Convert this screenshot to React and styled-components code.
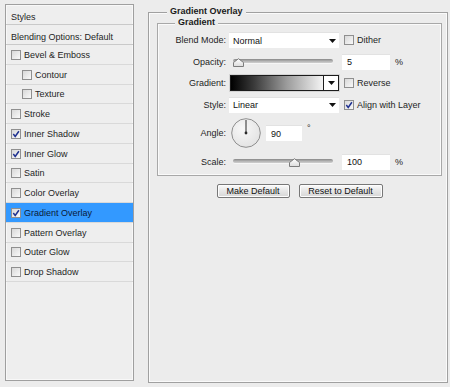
import React from "react";
import styled, {createGlobalStyle} from "styled-components";

const GlobalStyle = createGlobalStyle`
  body {
    margin: 0;
    background: #ececec;
    font-family: "Liberation Sans", Arial, sans-serif;
    font-size: 9px;
    color: #1e1e1e;
  }
`

const effects = [
    {name: "Bevel & Emboss"},
    {name: "Contour", sub: true},
    {name: "Texture", sub: true},
    {name: "Stroke"},
    {name: "Inner Shadow", checked: true},
    {name: "Inner Glow", checked: true},
    {name: "Satin"},
    {name: "Color Overlay"},
    {name: "Gradient Overlay", checked: true, selected: true},
    {name: "Pattern Overlay"},
    {name: "Outer Glow"},
    {name: "Drop Shadow"},
]

const Page = styled.div`
  display: flex;
  width: 450px;
  height: 387px;
  box-sizing: border-box;
  padding: 4px 2px 4px 5px;
  gap: 14px;
`

const StylesPanel = styled.div`
  width: 129px;
  margin-bottom: 2px;
  box-sizing: border-box;
  border: 1px solid #9f9f9f;
  box-shadow: inset 0 0 0 1px #f8f8f8;
  background: #eeeeee;
  display: flex;
  flex-direction: column;
`

const ListRow = styled.div`
  display: flex;
  align-items: center;
  gap: 3px;
  height: ${({tall}) => tall ? 20 : 19.75}px;
  box-sizing: border-box;
  padding-left: ${({sub}) => sub ? 16 : 5}px;
  padding-top: ${({tall}) => tall ? 4 : 1}px;
  border-bottom: 1px solid ${({tall}) => tall ? '#c9c9c9' : '#d9d9d9'};
  background: ${({selected}) => selected ? '#3399ff' : 'transparent'};
  color: ${({selected}) => selected ? '#0a1a3a' : '#1e1e1e'};
  white-space: nowrap;
`

const CheckBox = ({checked}) => (
    <svg width="10" height="10" viewBox="0 0 10 10" style={{flex: "none"}}>
        <defs>
            <linearGradient id="cbfill" x1="0" y1="0" x2="1" y2="1">
                <stop offset="0" stopColor="#d6d6d6"/>
                <stop offset="1" stopColor="#fbfbfb"/>
            </linearGradient>
        </defs>
        <rect x="0.5" y="0.5" width="9" height="9" fill="url(#cbfill)" stroke="#8f8f8f"/>
        {checked && <path d="M2.3 5.1 L4.2 7.4 L7.9 2.2" fill="none" stroke="#1f3190" strokeWidth="1.5"/>}
    </svg>
)

const Settings = styled.fieldset`
  flex: none;
  width: 300px;
  margin: 2px 0 0 0;
  min-width: 0;
  box-sizing: border-box;
  padding: 0 5px 0 8px;
  border: 1px solid #a0a0a0;
  box-shadow: inset 0 0 0 1px #fafafa;
`

const GroupBox = styled.fieldset`
  margin: -2px 0 0 0;
  min-width: 0;
  padding: 2px 0 5px 0;
  border: 1px solid #a8a8a8;
  box-shadow: inset 0 0 0 1px #fafafa;
`

const Legend = styled.legend`
  margin-left: ${({indent}) => indent}px;
  padding: 0 3px 3px;
  line-height: 10px;
  font-weight: bold;
  color: #1a1a1a;
  background: #ececec;
`

const FormGrid = styled.div`
  display: grid;
  grid-template-columns: 68px 110px 1fr;
  column-gap: 3px;
  row-gap: 5.6px;
  align-items: center;
`

const Label = styled.div`
  text-align: right;
  white-space: nowrap;
`

const Cell = styled.div`
  display: flex;
  align-items: center;
  gap: ${({gap}) => gap || 0}px;
`

const Field = styled.div`
  display: flex;
  align-items: center;
  justify-content: space-between;
  width: ${({width}) => width ? `${width}px` : 'auto'};
  flex: ${({width}) => width ? 'none' : 1};
  height: 16px;
  box-sizing: border-box;
  padding: 0 3px 0 ${({pad}) => pad || 4}px;
  background: #ffffff;
  border-top: 1px solid #e2e2e2;
  color: #111;
`

const Arrow = () => (
    <svg width="7" height="4" viewBox="0 0 7 4">
        <polygon points="0,0 7,0 3.5,4" fill="#111"/>
    </svg>
)

const Select = ({value}) => (
    <Field>
        <span>{value}</span>
        <Arrow/>
    </Field>
)

const Option = styled.label`
  display: flex;
  align-items: center;
  gap: 3px;
  margin-left: 2px;
  white-space: nowrap;
`

const Unit = styled.span`
  align-self: ${({sup}) => sup ? 'flex-start' : 'center'};
  margin-top: ${({sup}) => sup ? '5px' : 0};
`

const SliderBox = styled.div`
  position: relative;
  flex: 1;
  height: 16px;
  margin: 0 6px 0 4px;
`

const Track = styled.div`
  margin-top: 5px;
  height: 4px;
  border-radius: 2px;
  background: linear-gradient(#888, #b8b8b8 60%, #d0d0d0);
  box-shadow: 0 1px 0 #f6f6f6;
`

const Thumb = styled.svg`
  position: absolute;
  top: 4px;
`

const Slider = ({value}) => (
    <SliderBox>
        <Track/>
        <Thumb width="11" height="9" viewBox="0 0 11 9" style={{left: `calc(${value}% - 5px)`}}>
            <defs>
                <linearGradient id="thumbfill" x1="0" y1="0" x2="0" y2="1">
                    <stop offset="0" stopColor="#ffffff"/>
                    <stop offset="1" stopColor="#dcdcdc"/>
                </linearGradient>
            </defs>
            <polygon points="0.5,8.5 0.5,4.5 5.5,0.7 10.5,4.5 10.5,8.5" fill="url(#thumbfill)" stroke="#7c7c7c"/>
        </Thumb>
    </SliderBox>
)

const GradientPicker = styled.div`
  display: flex;
  flex: 1;
  height: 16px;
  margin-left: 1px;
  box-sizing: border-box;
  border: 1px solid #1c1c1c;
  box-shadow: 0 0 0 1px #d4d4d4;
`

const GradientRamp = styled.div`
  flex: 1;
  background: linear-gradient(to right, #000 0%, #3a3a3a 25%, #9a9a9a 60%, #f4f4f4 100%);
`

const PickerButton = styled.div`
  width: 14px;
  display: flex;
  align-items: center;
  justify-content: center;
  border-left: 1px solid #1c1c1c;
  background: #fff;
`

const Dial = ({angle}) => {
    const rad = angle * Math.PI / 180
    const x = 15 + Math.cos(rad) * 13
    const y = 15 - Math.sin(rad) * 13
    return (
        <svg width="30" height="30" viewBox="0 0 30 30" style={{flex: "none", marginLeft: 2}}>
            <defs>
                <radialGradient id="dialfill" cx="0.4" cy="0.35" r="0.7">
                    <stop offset="0" stopColor="#f8f8f8"/>
                    <stop offset="1" stopColor="#e2e2e2"/>
                </radialGradient>
            </defs>
            <circle cx="15" cy="15" r="14.3" fill="url(#dialfill)" stroke="#8e8e8e"/>
            <line x1="15" y1="15" x2={x} y2={y} stroke="#2a2a2a" strokeWidth="1"/>
            <circle cx="15" cy="15" r="1.4" fill="#2a2a2a"/>
        </svg>
    )
}

const ButtonRow = styled.div`
  display: flex;
  justify-content: center;
  gap: 9px;
  margin-top: 8px;
`

const Button = styled.div`
  width: ${({width}) => width}px;
  height: 14px;
  box-sizing: border-box;
  display: flex;
  align-items: center;
  justify-content: center;
  border: 1px solid #777;
  border-radius: 2px;
  background: linear-gradient(#fbfbfb, #e6e6e6 50%, #d6d6d6);
  box-shadow: inset 0 0 0 1px #fdfdfd;
  color: #111;
  white-space: nowrap;
`

const App = () => (
    <>
        <GlobalStyle/>
        <Page>
            <StylesPanel>
                <ListRow tall>Styles</ListRow>
                <ListRow tall>Blending Options: Default</ListRow>
                {effects.map(effect => (
                    <ListRow key={effect.name} sub={effect.sub} selected={effect.selected}>
                        <CheckBox checked={effect.checked}/>
                        {effect.name}
                    </ListRow>
                ))}
            </StylesPanel>

            <Settings>
                <Legend indent={10}>Gradient Overlay</Legend>
                <GroupBox>
                    <Legend indent={17}>Gradient</Legend>
                    <FormGrid>
                        <Label>Blend Mode:</Label>
                        <Cell><Select value="Normal"/></Cell>
                        <Cell><Option><CheckBox/>Dither</Option></Cell>

                        <Label>Opacity:</Label>
                        <Cell><Slider value={5}/></Cell>
                        <Cell gap={5}><Field width={48} pad={5}>5</Field><Unit>%</Unit></Cell>

                        <Label>Gradient:</Label>
                        <Cell>
                            <GradientPicker>
                                <GradientRamp/>
                                <PickerButton><Arrow/></PickerButton>
                            </GradientPicker>
                        </Cell>
                        <Cell><Option><CheckBox/>Reverse</Option></Cell>

                        <Label>Style:</Label>
                        <Cell><Select value="Linear"/></Cell>
                        <Cell><Option><CheckBox checked/>Align with Layer</Option></Cell>

                        <Label>Angle:</Label>
                        <Cell gap={5}>
                            <Dial angle={90}/>
                            <Field width={36} pad={5}>90</Field>
                            <Unit sup>°</Unit>
                        </Cell>
                        <div/>

                        <Label>Scale:</Label>
                        <Cell><Slider value={60.5}/></Cell>
                        <Cell gap={5}><Field width={48} pad={5}>100</Field><Unit>%</Unit></Cell>
                    </FormGrid>
                </GroupBox>
                <ButtonRow>
                    <Button width={73}>Make Default</Button>
                    <Button width={84}>Reset to Default</Button>
                </ButtonRow>
            </Settings>
        </Page>
    </>
)

export default App
